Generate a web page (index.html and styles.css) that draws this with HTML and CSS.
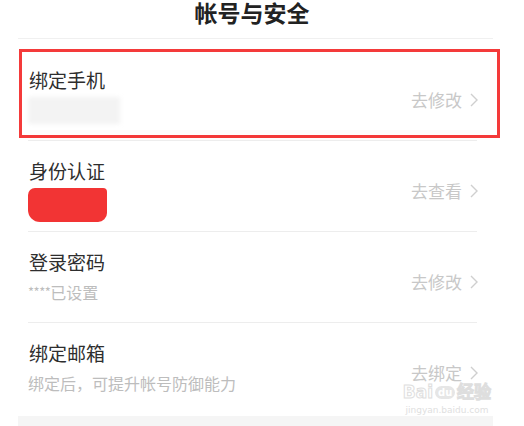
FILE: index.html
```
<!DOCTYPE html>
<html lang="zh-CN">
<head>
    <meta charset="UTF-8">
    <meta name="viewport" content="width=device-width, initial-scale=1.0">
    <title>帐号与安全</title>
    <link rel="stylesheet" href="styles.css">
</head>
<body>
    <div class="page">
        <!-- Header -->
        <div class="header">
            <h1>帐号与安全</h1>
        </div>

        <!-- Settings list -->
        <div class="list">
            <div class="row">
                <div class="info">
                    <div class="title">绑定手机</div>
                    <div class="masked"></div>
                </div>
                <div class="action">去修改
                    <svg class="chev" viewBox="0 0 10 16" width="10" height="16"><path d="M2 2 L8 8 L2 14" fill="none" stroke="#cfcfcf" stroke-width="1.4"/></svg>
                </div>
            </div>
            <div class="row">
                <div class="info">
                    <div class="title">身份认证</div>
                    <div class="redacted"></div>
                </div>
                <div class="action">去查看
                    <svg class="chev" viewBox="0 0 10 16" width="10" height="16"><path d="M2 2 L8 8 L2 14" fill="none" stroke="#cfcfcf" stroke-width="1.4"/></svg>
                </div>
            </div>
            <div class="row">
                <div class="info">
                    <div class="title">登录密码</div>
                    <div class="sub"><span class="stars">****</span>已设置</div>
                </div>
                <div class="action">去修改
                    <svg class="chev" viewBox="0 0 10 16" width="10" height="16"><path d="M2 2 L8 8 L2 14" fill="none" stroke="#cfcfcf" stroke-width="1.4"/></svg>
                </div>
            </div>
            <div class="row last">
                <div class="info">
                    <div class="title">绑定邮箱</div>
                    <div class="sub">绑定后，可提升帐号防御能力</div>
                </div>
                <div class="action">去绑定
                    <svg class="chev" viewBox="0 0 10 16" width="10" height="16"><path d="M2 2 L8 8 L2 14" fill="none" stroke="#cfcfcf" stroke-width="1.4"/></svg>
                </div>
            </div>
        </div>

        <div class="footer-bar"></div>

        <!-- Highlight box over first row -->
        <div class="highlight"></div>

        <!-- Watermark -->
        <div class="watermark">
            <div class="wm-main">Bai<span class="paw">du</span>经验</div>
            <div class="wm-url">jingyan.baidu.com</div>
        </div>
    </div>
</body>
</html>
```

FILE: styles.css
```
body {
    margin: 0;
    background: #fff;
    font-family: "Noto Sans CJK SC", "Noto Sans", sans-serif;
    overflow: hidden;
}
.page {
    position: relative;
    width: 475px;
    margin-left: 18px;
    height: 426px;
}
.header {
    height: 38px;
    border-bottom: 1px solid #f0f0f0;
    padding-right: 7px;
    text-align: center;
}
.header h1 {
    margin: 0;
    font-size: 23px;
    line-height: 24px;
    font-weight: bold;
    color: #222;
}
.list {
    margin: 11px 16px 0 10px;
}
.row {
    display: flex;
    justify-content: space-between;
    height: 91px;
    box-sizing: border-box;
    padding-top: 17px;
    border-bottom: 1px solid #ededed;
}
.row.last {
    border-bottom: none;
}
.title {
    font-size: 19px;
    line-height: 26px;
    color: #2e2e2e;
    padding-left: 1px;
}
.sub {
    margin-top: 6px;
    font-size: 16px;
    line-height: 22px;
    color: #bdbdbd;
}
.stars {
    font-size: 13px;
    letter-spacing: -0.5px;
    vertical-align: 2px;
}
.masked {
    margin-top: 4px;
    width: 92px;
    height: 27px;
    background: #f3f3f3;
    filter: blur(2px);
}
.redacted {
    margin-top: 4px;
    width: 79px;
    height: 34px;
    background: #f23434;
    border-radius: 7px 4px 9px 12px;
    filter: blur(0.6px);
}
.action {
    margin-top: 24px;
    margin-right: -2px;
    height: 18px;
    display: flex;
    align-items: center;
    font-size: 17px;
    line-height: 18px;
    color: #c8c8c8;
}
.chev {
    margin-left: 7px;
}
.footer-bar {
    margin-top: 2px;
    height: 12px;
    background: #f5f5f5;
}

/* Red highlight frame */
.highlight {
    position: absolute;
    left: 1px;
    top: 49px;
    width: 481px;
    height: 89px;
    box-sizing: border-box;
    border: 3px solid #f43a3a;
}

/* Watermark */
.watermark {
    position: absolute;
    left: 382px;
    top: 384px;
    width: 94px;
    text-align: center;
    font-family: "DejaVu Sans", sans-serif;
    color: rgba(255, 255, 255, 0.6);
}
.wm-main {
    font-size: 17px;
    line-height: 16px;
    -webkit-text-stroke: 1px #dedede;
    font-weight: bold;
}
.paw {
    display: inline-block;
    font-size: 10px;
    line-height: 13px;
    padding: 0 3px;
    margin: 0 2px;
    border-radius: 8px;
    background: #e6e6e6;
    color: #fff;
    -webkit-text-stroke: 0;
    vertical-align: 2px;
}
.wm-url {
    font-size: 9px;
    line-height: 12px;
    margin-top: 4px;
    color: #e0e0e0;
}
```
